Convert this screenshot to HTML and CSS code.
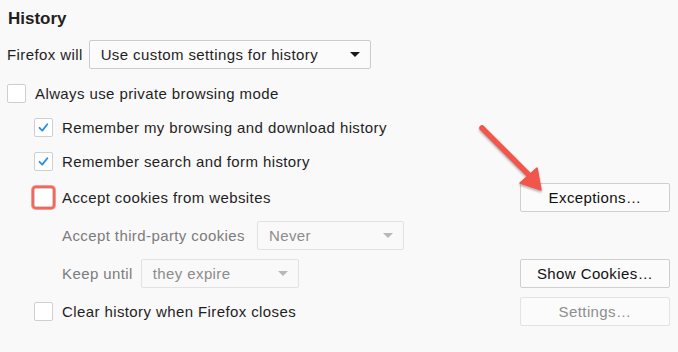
FILE: index.html
```html
<!DOCTYPE html>
<html>
<head>
<meta charset="utf-8">
<link rel="stylesheet" href="styles.css">
</head>
<body>
<div class="panel">
  <h2 class="title">History</h2>
  <div class="row r-select">
    <span class="label">Firefox will</span>
    <div class="select main-select"><span>Use custom settings for history</span><span class="caret"></span></div>
  </div>
  <div class="row r-private">
    <span class="box"></span><span class="label">Always use private browsing mode</span>
  </div>
  <div class="row r-sub r-tight">
    <span class="box checked"><svg viewBox="0 0 19 19" width="19" height="19"><path d="M5.5 9.8 L8.3 12.6 L13.3 6.2" fill="none" stroke="#2c8ee8" stroke-width="1.8" stroke-linecap="round" stroke-linejoin="round"/></svg></span><span class="label">Remember my browsing and download history</span>
  </div>
  <div class="row r-sub r-tight">
    <span class="box checked"><svg viewBox="0 0 19 19" width="19" height="19"><path d="M5.5 9.8 L8.3 12.6 L13.3 6.2" fill="none" stroke="#2c8ee8" stroke-width="1.8" stroke-linecap="round" stroke-linejoin="round"/></svg></span><span class="label">Remember search and form history</span>
  </div>
  <div class="row r-sub r-split r-cookies">
    <div class="left"><span class="box focus"></span><span class="label">Accept cookies from websites</span></div>
    <div class="btn">Exceptions…</div>
  </div>
  <div class="row r-deep r-gap">
    <span class="label dim">Accept third-party cookies</span>
    <div class="select dis sel-never"><span>Never</span><span class="caret"></span></div>
  </div>
  <div class="row r-deep r-split r-gap">
    <div class="left"><span class="label dim">Keep until</span>
    <div class="select dis sel-keep"><span>they expire</span><span class="caret"></span></div></div>
    <div class="btn">Show Cookies…</div>
  </div>
  <div class="row r-sub r-split r-gap">
    <div class="left"><span class="box"></span><span class="label">Clear history when Firefox closes</span></div>
    <div class="btn dis">Settings…</div>
  </div>
  <svg class="arrow" width="90" height="90" viewBox="0 0 90 90">
    <defs>
      <filter id="sh" x="-20%" y="-20%" width="140%" height="140%">
        <feDropShadow dx="0" dy="1.5" stdDeviation="1.2" flood-color="#000" flood-opacity="0.35"/>
      </filter>
    </defs>
    <g filter="url(#sh)" fill="#f0564c" stroke="#f0564c">
      <line x1="12" y1="13" x2="58" y2="59" stroke-width="5.5" stroke-linecap="round"/>
      <polygon points="71,75 50,68 67,53" stroke-width="1.5" stroke-linejoin="round"/>
    </g>
  </svg>
</div>
</body>
</html>
```

FILE: styles.css
```css
html, body {
  margin: 0;
  padding: 0;
  background: #f9f9f9;
}
body {
  width: 678px;
  height: 352px;
  overflow: hidden;
  font-family: "Liberation Sans", Arial, sans-serif;
  font-size: 15px;
  letter-spacing: 0.4px;
  color: #1f1f1f;
}
.panel {
  position: relative;
  padding: 0 8px 0 7px;
}
.title {
  margin: 0;
  height: 40px;
  line-height: 37px;
  font-size: 17px;
  font-weight: bold;
  letter-spacing: 0;
  color: #1f1f1f;
  padding-left: 1px;
}
.row {
  display: flex;
  align-items: center;
  height: 29px;
}
.r-private { margin-top: 10px; }
.r-tight { margin-top: 5px; }
.r-cookies { margin-top: 7px; }
.r-gap { margin-top: 9px; }
.r-sub { padding-left: 27px; }
.r-deep { padding-left: 55px; }
.r-split { justify-content: space-between; }
.left {
  display: flex;
  align-items: center;
}
.label { white-space: nowrap; }
.dim { color: #7c7c7c; }
.box {
  box-sizing: border-box;
  width: 19px;
  height: 19px;
  border: 1px solid #cfcfcf;
  border-radius: 2px;
  background: #fff;
  margin-right: 9px;
  display: flex;
  flex-shrink: 0;
}
.box svg { display: block; margin: -1px; }
.box.focus {
  box-shadow: 0 0 0 2px #f6655c, 0 0 0 3px #f89890;
}
.select {
  box-sizing: border-box;
  height: 29px;
  border: 1px solid #cccccc;
  border-radius: 2px;
  background: #fbfbfb;
  display: flex;
  align-items: center;
  justify-content: space-between;
  padding: 0 10px 0 11px;
  margin-left: 6px;
  white-space: nowrap;
}
.main-select { width: 282px; }
.caret {
  width: 0;
  height: 0;
  border-left: 5px solid transparent;
  border-right: 5px solid transparent;
  border-top: 5px solid #1a1a1a;
}
.select.dis {
  border-color: #e2e2e2;
  color: #8c8c8c;
  background: #f9f9f9;
}
.select.dis .caret { border-top-color: #b8b8b8; }
.sel-never { width: 147px; margin-left: 12px; }
.sel-keep { width: 158px; margin-left: 8px; }
.btn {
  box-sizing: border-box;
  width: 150px;
  height: 29px;
  border: 1px solid #cfcfcf;
  border-radius: 2px;
  background: #fbfbfb;
  display: flex;
  align-items: center;
  justify-content: center;
  color: #111;
}
.btn.dis {
  border-color: #e3e3e3;
  color: #8e8e8e;
}
.arrow {
  position: absolute;
  left: 470px;
  top: 115px;
}
```
